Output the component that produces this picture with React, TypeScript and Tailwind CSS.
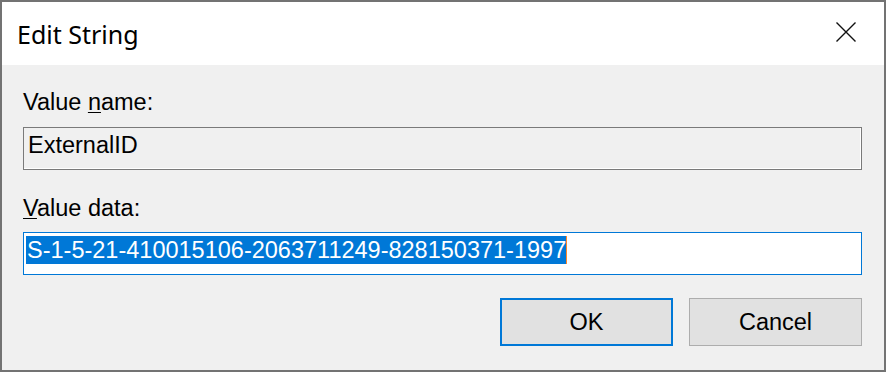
import { useState } from "react";

const sans = "font-['Liberation_Sans',Arial,sans-serif]";

function CloseIcon() {
  return (
    <svg width="20" height="20" viewBox="0 0 20 20" fill="none">
      <path d="M0.5 0.5 L19.5 19.5 M19.5 0.5 L0.5 19.5" stroke="#111" strokeWidth="1.4" />
    </svg>
  );
}

function Label({ pre, hot, post }: { pre: string; hot: string; post: string }) {
  return (
    <div className={`${sans} text-[23.5px] leading-[24px] text-black`}>
      {pre}
      <span className="underline decoration-1 underline-offset-[2px]">{hot}</span>
      {post}
    </div>
  );
}

export default function App() {
  const [name] = useState("ExternalID");
  const [data] = useState("S-1-5-21-410015106-2063711249-828150371-1997");

  return (
    <div className="h-[372px] w-[886px] border-2 border-[#737373] bg-[#f0f0f0]">
      {/* Title bar */}
      <div className="flex h-[63px] items-start justify-between bg-white">
        <div className="pl-[15px] pt-[20px] font-['Noto_Sans',sans-serif] text-[25px] leading-[24px] text-black">
          Edit String
        </div>
        <button className="mr-[28px] mt-[20px] flex h-[20px] w-[20px] items-center justify-center">
          <CloseIcon />
        </button>
      </div>

      {/* Body */}
      <div className="flex flex-col pl-[21px] pr-[22px]">
        <div className="mt-[25px]">
          <Label pre="Value " hot="n" post="ame:" />
        </div>
        <div
          className={`${sans} mt-[13px] h-[43px] border border-[#7a7a7a] bg-[#f0f0f0] pl-[4px] pt-[5px] text-[23.5px] leading-[24px] text-black shadow-[inset_-1px_-1px_0_#ffffff]`}
        >
          {name}
        </div>

        <div className="mt-[26px]">
          <Label pre="" hot="V" post="alue data:" />
        </div>
        <div className={`${sans} mt-[12px] h-[43px] border border-[#0078d7] bg-white pl-[2px] pt-[3px]`}>
          <div className="flex items-start">
            <span className="inline-block bg-[#0078d7] pl-[1px] text-[23.5px] leading-[28px] text-white">
              {data}
            </span>
            <span className="inline-block h-[28px] w-[1px] bg-[#ff8728]" />
          </div>
        </div>

        {/* Buttons */}
        <div className="mt-[23px] flex justify-end gap-[16px]">
          <button
            className={`${sans} flex h-[48px] w-[173px] items-center justify-center border-2 border-[#0078d7] bg-[#e1e1e1] text-[23.5px] leading-[24px] text-black`}
          >
            OK
          </button>
          <button
            className={`${sans} flex h-[48px] w-[173px] items-center justify-center border border-[#adadad] bg-[#e1e1e1] text-[23.5px] leading-[24px] text-black`}
          >
            Cancel
          </button>
        </div>
      </div>
    </div>
  );
}
